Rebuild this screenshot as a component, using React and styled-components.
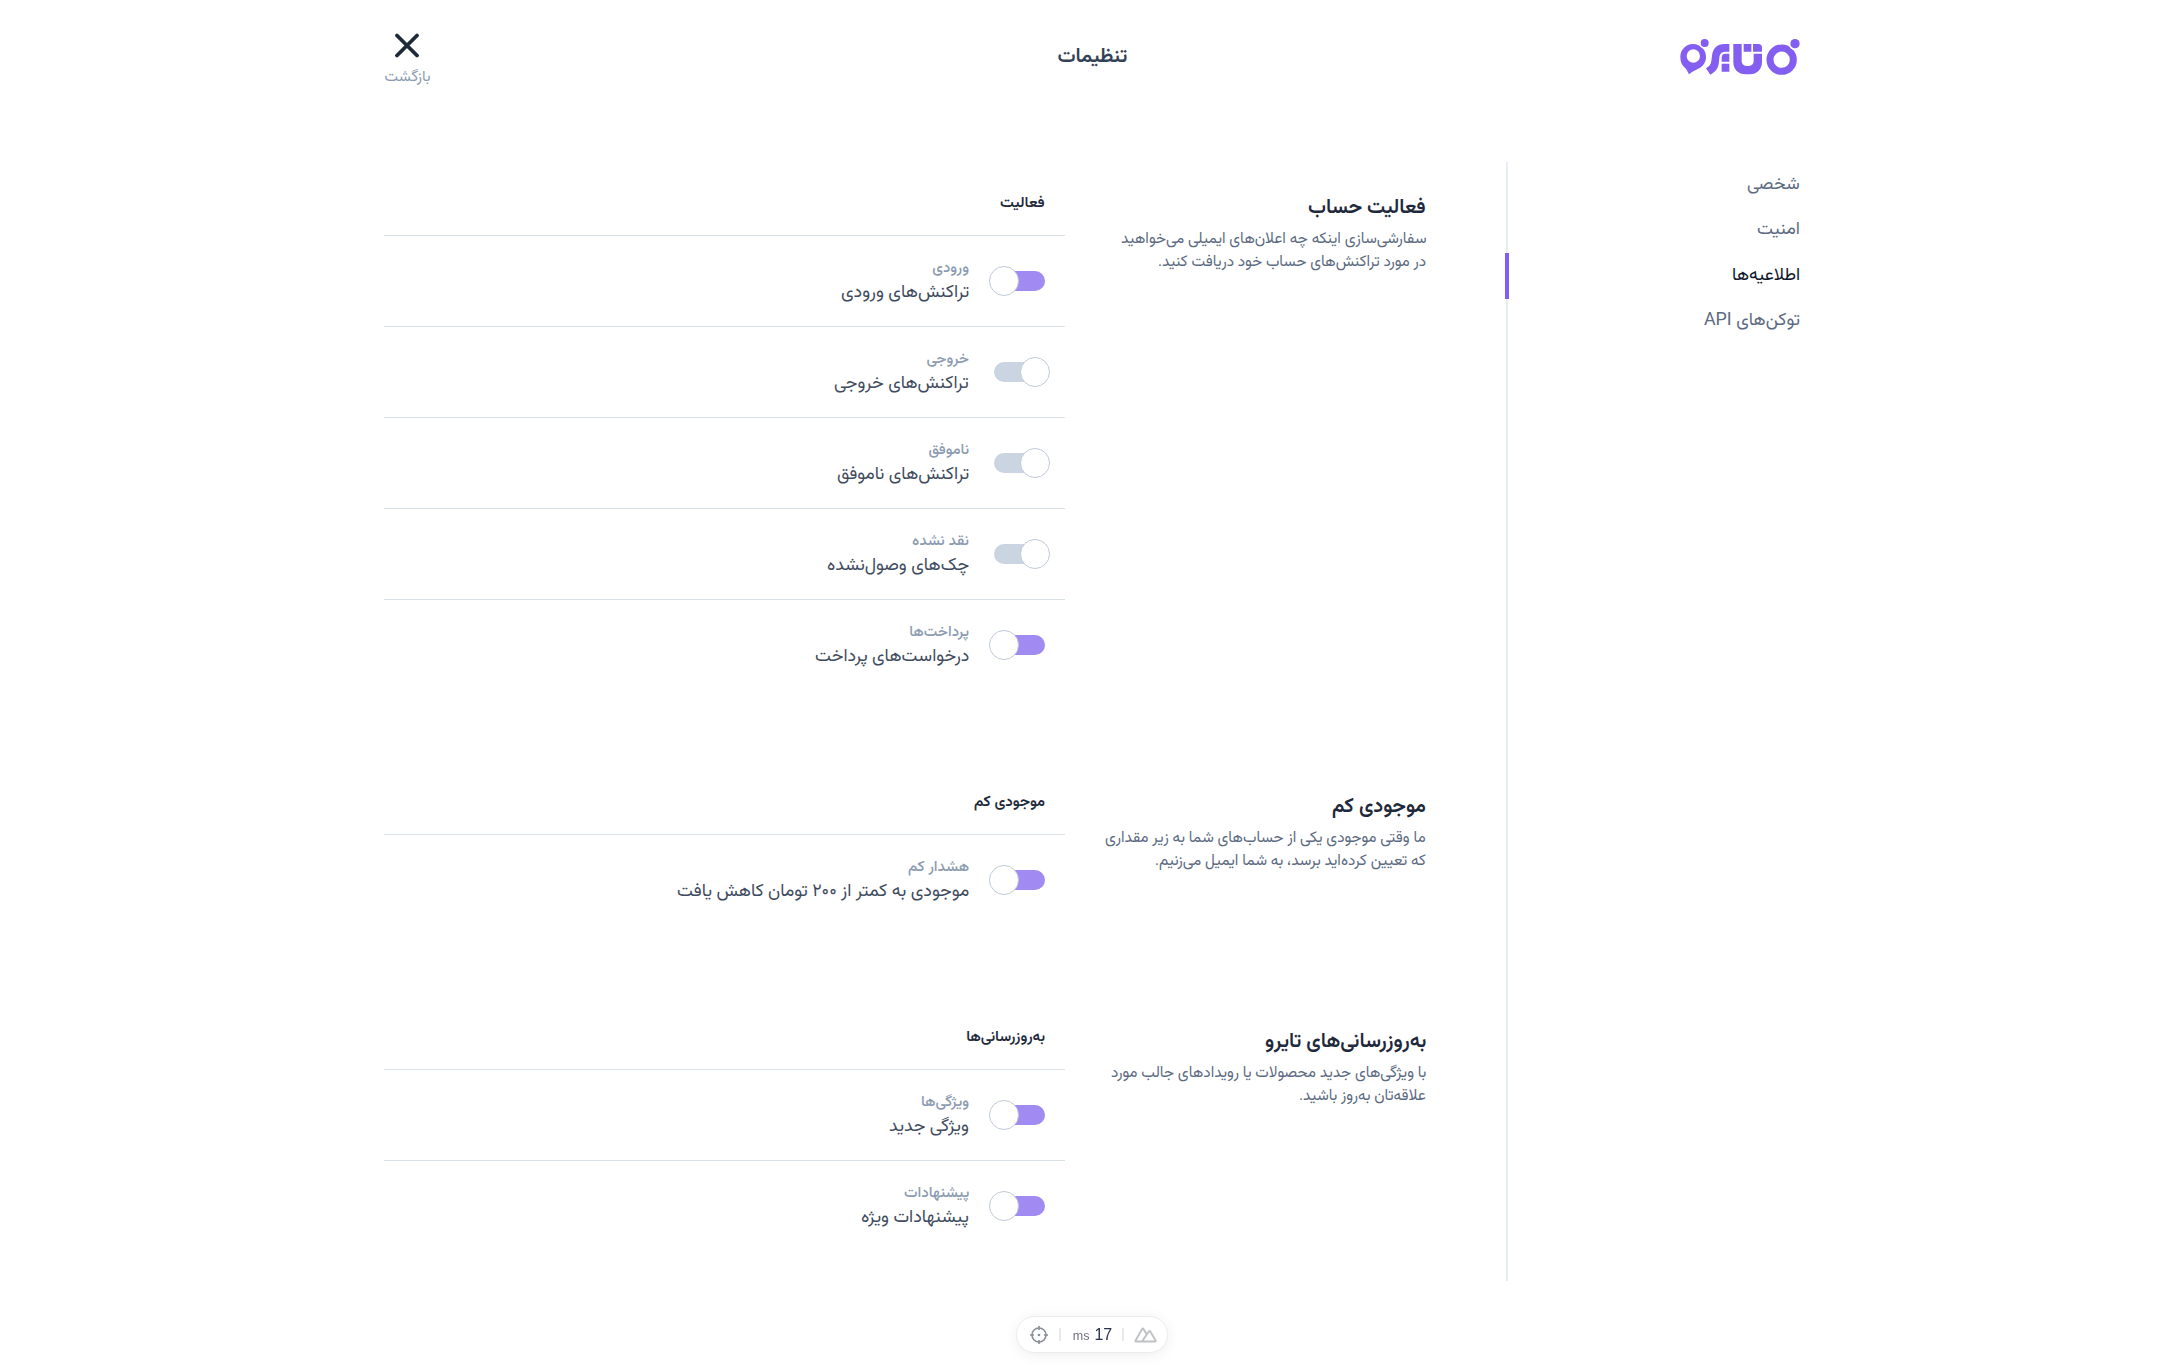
import React, { useLayoutEffect, useRef, useState } from "react";
import styled, { createGlobalStyle } from "styled-components";

const Global = createGlobalStyle`
  *, *::before, *::after { box-sizing: border-box; }
  body {
    margin: 0;
    background: #fff;
    font-family: Roboto, Vazirmatn, "Noto Sans Arabic", "DejaVu Sans", sans-serif;
    overflow: hidden;
  }
`;

const Page = styled.div`
  width: 1416px;
  height: 1365px;
  margin: 0 auto;
  display: flex;
  flex-direction: column;
`;

const Header = styled.header`
  height: 162px;
  padding-top: 32px;
  display: grid;
  grid-template-columns: 1fr auto 1fr;
  align-items: start;
`;

const Logo = styled.svg`
  width: 120px;
  height: 38px;
  margin-top: 6px;
  display: block;
`;

const PageTitle = styled.h1`
  margin: 0;
  font-size: 20px;
  font-weight: 600;
  line-height: 46px;
  color: #334155;
`;

const Back = styled.a`
  justify-self: end;
  width: 46px;
  display: flex;
  flex-direction: column;
  align-items: center;
  color: #1e293b;
`;

const BackLabel = styled.span`
  font-size: 15.5px;
  line-height: 20px;
  margin-top: 8px;
  color: #8c9bb1;
  white-space: nowrap;
`;

const Body = styled.div`
  display: flex;
  height: 1119px;
`;

const Nav = styled.nav`
  width: 294px;
  flex: none;
  border-left: 2px solid #e8edf4;
`;

const NavItem = styled.a`
  display: flex;
  align-items: center;
  height: 45.5px;
  margin-left: -3px;
  font-size: 18px;
  color: ${(p) => (p.$active ? "#0f172a" : "#5c6b82")};
  border-left: 4px solid ${(p) => (p.$active ? "#845ef0" : "transparent")};
`;

const Sections = styled.main`
  flex: 1;
  display: flex;
  flex-direction: column;
  gap: 97.5px;
  padding: 6px 80px 0 0;
`;

const Section = styled.section`
  display: flex;
  justify-content: space-between;
  height: ${(p) => p.$rows * 91 + 46.5}px;
  &:first-child { height: 501.5px; }
`;

const Intro = styled.div`
  padding-top: 24px;
`;

const Heading = styled.h2`
  margin: 0;
  font-size: 20.5px;
  font-weight: 600;
  line-height: 28px;
  color: #1e293b;
`;

const Description = styled.p`
  margin: 7px 0 0;
  font-size: 15.75px;
  line-height: 22.75px;
  color: #5c6b82;
  white-space: nowrap;
`;

const List = styled.div`
  width: 681px;
  flex: none;
`;

const ListTitle = styled.h3`
  margin: 0;
  height: 67px;
  padding: 22px 20px 0 0;
  font-size: 15px;
  font-weight: 600;
  line-height: 24px;
  color: #1e293b;
`;

const Row = styled.div`
  display: flex;
  align-items: center;
  gap: 25px;
  height: 91px;
  padding-right: 20px;
  border-top: 1px solid #d8e0ea;
`;

const Track = styled.button`
  width: 51px;
  height: 20px;
  padding: 0;
  border: 0;
  border-radius: 10px;
  display: flex;
  align-items: center;
  flex: none;
  justify-content: ${(p) => (p.$on ? "flex-end" : "flex-start")};
  background: ${(p) => (p.$on ? "#a28af3" : "#cbd5e1")};
`;

const Knob = styled.span`
  width: 30px;
  height: 30px;
  flex: none;
  margin: 0 -5px;
  border-radius: 50%;
  background: #fff;
  border: 1px solid #c0cad8;
`;

const RowText = styled.div`
  display: flex;
  flex-direction: column;
  white-space: nowrap;
`;

const RowLabel = styled.span`
  font-size: 15px;
  line-height: 20px;
  font-weight: 500;
  color: #8c9bb1;
`;

const RowName = styled.span`
  font-size: 18px;
  line-height: 28px;
  color: #3f4c60;
`;

const Fitted = styled.span`
  display: inline-block;
  white-space: nowrap;
  transform-origin: ${(p) => p.$origin} center;
`;

const Pill = styled.div`
  position: fixed;
  left: 1016px;
  bottom: 12px;
  width: 152px;
  height: 37px;
  border-radius: 19px;
  border: 1px solid #ececee;
  background: #fff;
  box-shadow: 0 2px 14px rgba(0, 0, 0, 0.07);
  display: flex;
  align-items: center;
  justify-content: space-between;
  padding: 0 10px 0 12px;
  direction: ltr;
`;

const Divider = styled.span`
  width: 2px;
  height: 13px;
  background: #e8e9eb;
`;

const Timing = styled.span`
  display: flex;
  align-items: baseline;
  gap: 5px;
  margin-left: 2px;
  font-family: "Liberation Sans", sans-serif;
  font-size: 16px;
  color: #27324b;
`;

const Unit = styled.span`
  font-size: 12.5px;
  color: #71717a;
`;

/* Condenses a line of text horizontally to the given width. */
function Line({ w, origin = "right", children }) {
  const ref = useRef(null);
  const [scale, setScale] = useState(1);
  useLayoutEffect(() => {
    setScale(w / ref.current.offsetWidth);
  }, [w]);
  return (
    <Fitted ref={ref} $origin={origin} style={{ transform: `scaleX(${scale})` }}>
      {children}
    </Fitted>
  );
}

const NAV = [
  ["شخصی", 53],
  ["امنیت", 43],
  ["اطلاعیه‌ها", 68, true],
  ["توکن‌های API", 96],
];

const SECTIONS = [
  {
    title: ["فعالیت حساب", 118],
    text: [
      ["سفارشی‌سازی اینکه چه اعلان‌های ایمیلی می‌خواهید", 305],
      ["در مورد تراکنش‌های حساب خود دریافت کنید.", 268],
    ],
    list: ["فعالیت", 45],
    rows: [
      ["ورودی", 37, "تراکنش‌های ورودی", 128, true],
      ["خروجی", 43, "تراکنش‌های خروجی", 135, false],
      ["ناموفق", 41, "تراکنش‌های ناموفق", 132, false],
      ["نقد نشده", 57, "چک‌های وصول‌نشده", 142, false],
      ["پرداخت‌ها", 60, "درخواست‌های پرداخت", 154, true],
    ],
  },
  {
    title: ["موجودی کم", 94],
    text: [
      ["ما وقتی موجودی یکی از حساب‌های شما به زیر مقداری", 321],
      ["که تعیین کرده‌اید برسد، به شما ایمیل می‌زنیم.", 271],
    ],
    list: ["موجودی کم", 71],
    rows: [["هشدار کم", 61, "موجودی به کمتر از ۲۰۰ تومان کاهش یافت", 292, true]],
  },
  {
    title: ["به‌روزرسانی‌های تایرو", 161],
    text: [
      ["با ویژگی‌های جدید محصولات یا رویدادهای جالب مورد", 315],
      ["علاقه‌تان به‌روز باشید.", 127],
    ],
    list: ["به‌روزرسانی‌ها", 79],
    rows: [
      ["ویژگی‌ها", 48, "ویژگی جدید", 80, true],
      ["پیشنهادات", 65, "پیشنهادات ویژه", 108, true],
    ],
  },
];

function Brand() {
  return (
    <Logo viewBox="60 54 360 114" fill="#845ef0">
      <circle cx="365" cy="119" r="35" fill="none" stroke="#845ef0" strokeWidth="21" />
      <circle cx="405" cy="71" r="19" fill="#fff" />
      <circle cx="405" cy="71" r="14" />
      <path d="M220 72h25v52c0 8 6 14 14 14h8c8 0 14-6 14-14v-23h25v25c0 22-15 37-37 37h-12c-22 0-37-15-37-37z" />
      <path d="M251 72h23v23h-23zM279 72h16q11 0 11 11v12h-27z" />
      <path d="M208 72v23h-11c-12 0-18 6-19 18l-1 12c-1 19-10 30-26 39l-13-19c10-6 15-12 16-22l2-16c3-22 15-35 38-35z" />
      <path d="M208 101v24h-23v-12q0-12 12-12zM185 131h23v24h-23z" />
      <path fillRule="evenodd" d="M99 72a39 39 0 0 1 39 39c0 20-13 31-29 38-9 4-15 8-22 14l-9-17c-11-7-17-19-17-34a38 38 0 0 1 38-40zm1 16a20 20 0 1 0 0 40a20 20 0 0 0 0-40z" />
      <circle cx="134" cy="69" r="17" fill="#fff" />
      <circle cx="134" cy="69" r="12" />
    </Logo>
  );
}

export default function App() {
  return (
    <>
      <Global />
      <Page dir="rtl">
        <Header>
          <Brand />
          <PageTitle>
            <Line w={70} origin="center">تنظیمات</Line>
          </PageTitle>
          <Back>
            <svg width="26" height="26" viewBox="0 0 26 26" fill="none" stroke="currentColor" strokeWidth="3.8" strokeLinecap="round">
              <path d="M3 3.5l20 20M23 3.5l-20 20" />
            </svg>
            <BackLabel>
              <Line w={46} origin="center">بازگشت</Line>
            </BackLabel>
          </Back>
        </Header>
        <Body>
          <Nav>
            {NAV.map(([t, w, active]) => (
              <NavItem key={t} $active={active}>
                <Line w={w}>{t}</Line>
              </NavItem>
            ))}
          </Nav>
          <Sections>
            {SECTIONS.map((s) => (
              <Section key={s.title[0]} $rows={s.rows.length}>
                <Intro>
                  <Heading>
                    <Line w={s.title[1]}>{s.title[0]}</Line>
                  </Heading>
                  <Description>
                    <Line w={s.text[0][1]}>{s.text[0][0]}</Line>
                    <br />
                    <Line w={s.text[1][1]}>{s.text[1][0]}</Line>
                  </Description>
                </Intro>
                <List>
                  <ListTitle>
                    <Line w={s.list[1]}>{s.list[0]}</Line>
                  </ListTitle>
                  {s.rows.map(([label, lw, name, nw, on]) => (
                    <Row key={label}>
                      <Track $on={on}>
                        <Knob />
                      </Track>
                      <RowText>
                        <RowLabel>
                          <Line w={lw}>{label}</Line>
                        </RowLabel>
                        <RowName>
                          <Line w={nw}>{name}</Line>
                        </RowName>
                      </RowText>
                    </Row>
                  ))}
                </List>
              </Section>
            ))}
          </Sections>
        </Body>
      </Page>
      <Pill>
        <svg width="20" height="20" viewBox="0 0 20 20" fill="none" stroke="#8b8f98" strokeWidth="1.6">
          <circle cx="10" cy="10" r="7" />
          <path d="M10 1v4M10 15v4M1 10h4M15 10h4" />
          <circle cx="10" cy="10" r="1.3" fill="#8b8f98" stroke="none" />
        </svg>
        <Divider />
        <Timing>
          <Unit>ms</Unit>17
        </Timing>
        <Divider />
        <svg width="23" height="16" viewBox="0 0 23 16" fill="none" stroke="#bfc1c5" strokeWidth="1.9" strokeLinejoin="round" strokeLinecap="round">
          <path d="M11 14.5H2.2q-1.2 0-.6-1.1L8 2.2q.8-1.4 1.6 0l2.6 4.4M8 14.5l6.8-10q.8-1.1 1.5 0l5.3 8.9q.5 1.1-.7 1.1z" />
        </svg>
      </Pill>
    </>
  );
}
